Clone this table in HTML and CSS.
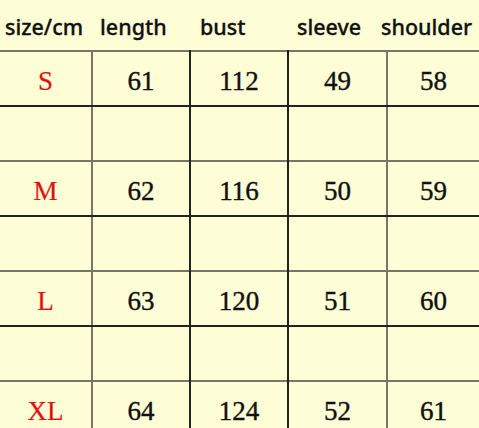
FILE: index.html
```html
<!DOCTYPE html>
<html>
<head>
<meta charset="utf-8">
<link rel="stylesheet" href="styles.css">
</head>
<body>
<div class="sheet">
  <div class="head">
    <span class="h">size/cm</span>
    <span class="h">length</span>
    <span class="h">bust</span>
    <span class="h">sleeve</span>
    <span class="h">shoulder</span>
  </div>
  <table class="grid">
    <colgroup>
      <col class="c1"><col class="c2"><col class="c3"><col class="c4"><col class="c5">
    </colgroup>
    <tr class="data"><td class="size">S</td><td>61</td><td>112</td><td>49</td><td>58</td></tr>
    <tr class="gap"><td></td><td></td><td></td><td></td><td></td></tr>
    <tr class="data"><td class="size">M</td><td>62</td><td>116</td><td>50</td><td>59</td></tr>
    <tr class="gap"><td></td><td></td><td></td><td></td><td></td></tr>
    <tr class="data"><td class="size">L</td><td>63</td><td>120</td><td>51</td><td>60</td></tr>
    <tr class="gap"><td></td><td></td><td></td><td></td><td></td></tr>
    <tr class="data"><td class="size">XL</td><td>64</td><td>124</td><td>52</td><td>61</td></tr>
  </table>
</div>
</body>
</html>
```

FILE: styles.css
```css
html, body {
  margin: 0;
  padding: 0;
  background: #fdfdd6;
}
.sheet {
  width: 479px;
  height: 428px;
  overflow: hidden;
  background: #fdfdd6;
}
.head {
  height: 50px;
  box-sizing: border-box;
  padding: 15px 0 0 5px;
  display: grid;
  grid-template-columns: 95px 100px 97px 84px auto;
  align-items: start;
  font-family: "Noto Sans", "Open Sans", sans-serif;
  font-size: 21.5px;
  line-height: 24px;
  font-weight: 500;
  color: #111;
  -webkit-text-stroke: 0.3px #111;
}
.h { white-space: nowrap; }
.grid {
  border-collapse: collapse;
  table-layout: fixed;
  width: 479px;
  font-family: "Liberation Serif", "DejaVu Serif", serif;
  font-size: 27px;
  color: #111;
  -webkit-text-stroke: 0.4px #111;
}
.c1 { width: 92px; }
.c2 { width: 98px; }
.c3 { width: 98px; }
.c4 { width: 99px; }
.c5 { width: 92px; }
.grid td {
  padding: 6px 0 0 0;
  text-align: center;
  height: 47px;
}
.grid td:nth-child(1) { border-right: 2px solid #76766a; }
.grid td:nth-child(2) { border-right: 2px solid #222; }
.grid td:nth-child(3) { border-right: 2px solid #222; }
.grid td:nth-child(4) { border-right: 2px solid #76766a; }
.data td { border-top: 2px solid #76766a; border-bottom: 2px solid #222; }
.grid td.size { color: #e31010; -webkit-text-stroke: 0.2px #e31010; }
```
